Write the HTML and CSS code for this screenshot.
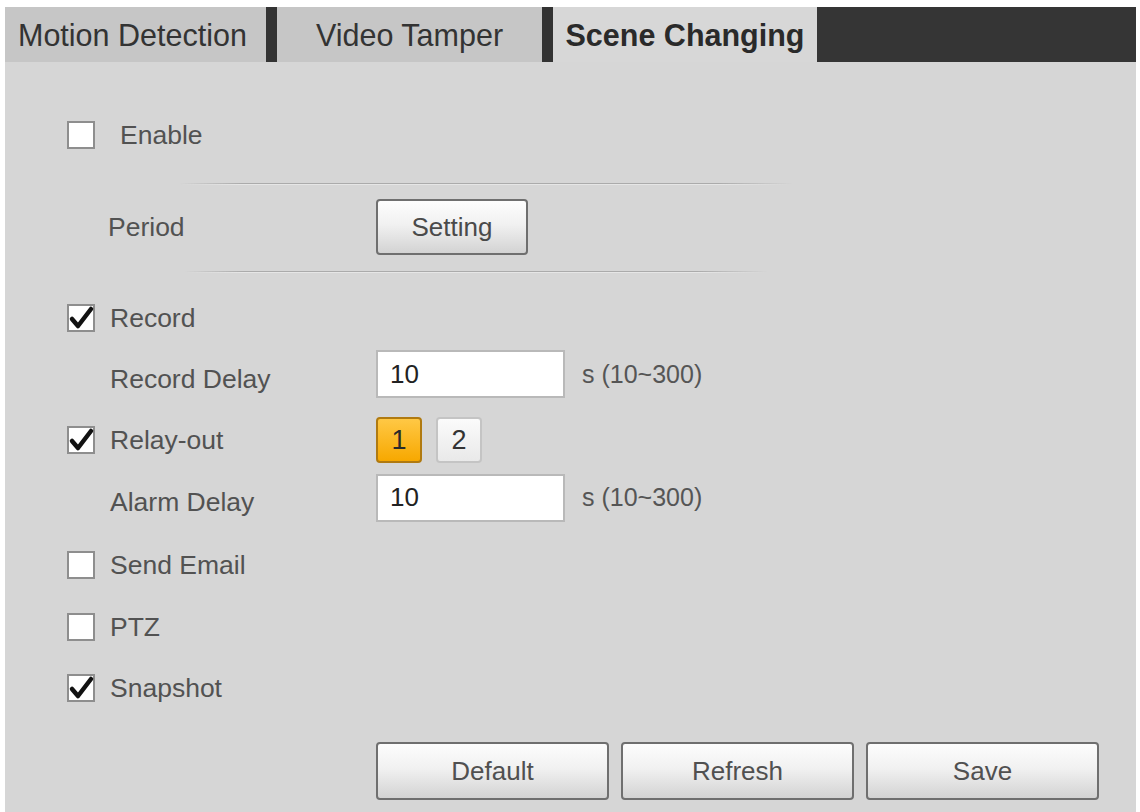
FILE: index.html
```html
<!DOCTYPE html>
<html lang="en">
<head>
<meta charset="utf-8">
<title>Scene Changing</title>
<link rel="stylesheet" href="styles.css">
</head>
<body>
<div class="page">
  <div class="tabs">
    <div class="tab tab-motion">Motion Detection</div>
    <div class="tab-sep"></div>
    <div class="tab tab-tamper">Video Tamper</div>
    <div class="tab-sep"></div>
    <div class="tab tab-active">Scene Changing</div>
    <div class="tab-fill"></div>
  </div>

  <div class="content">
    <div class="row row-enable">
      <div class="lab lab-enable">
        <span class="cb"></span>
        <span class="txt">Enable</span>
      </div>
    </div>

    <div class="divider divider-1"></div>

    <div class="row row-period">
      <div class="lab lab-indent lab-period"><span class="txt">Period</span></div>
      <button class="btn btn-setting">Setting</button>
    </div>

    <div class="divider divider-2"></div>

    <div class="row row-record">
      <div class="lab">
        <span class="cb checked"><svg viewBox="0 0 28 28"><path d="M5 15 L11 22 L24 5"/></svg></span>
        <span class="txt">Record</span>
      </div>
    </div>

    <div class="row row-rdelay">
      <div class="lab lab-indent lab-low"><span class="txt">Record Delay</span></div>
      <div class="field">10</div>
      <span class="unit">s (10~300)</span>
    </div>

    <div class="row row-relay">
      <div class="lab">
        <span class="cb checked"><svg viewBox="0 0 28 28"><path d="M5 15 L11 22 L24 5"/></svg></span>
        <span class="txt">Relay-out</span>
      </div>
      <div class="chans">
        <span class="chan chan-on">1</span>
        <span class="chan">2</span>
      </div>
    </div>

    <div class="row row-adelay">
      <div class="lab lab-indent lab-low"><span class="txt">Alarm Delay</span></div>
      <div class="field">10</div>
      <span class="unit">s (10~300)</span>
    </div>

    <div class="row row-email">
      <div class="lab">
        <span class="cb"></span>
        <span class="txt">Send Email</span>
      </div>
    </div>

    <div class="row row-ptz">
      <div class="lab">
        <span class="cb"></span>
        <span class="txt">PTZ</span>
      </div>
    </div>

    <div class="row row-snap">
      <div class="lab">
        <span class="cb checked"><svg viewBox="0 0 28 28"><path d="M5 15 L11 22 L24 5"/></svg></span>
        <span class="txt">Snapshot</span>
      </div>
    </div>

    <div class="row row-actions">
      <button class="btn btn-action btn-default">Default</button>
      <button class="btn btn-action btn-refresh">Refresh</button>
      <button class="btn btn-action btn-save">Save</button>
    </div>
  </div>
</div>
</body>
</html>
```

FILE: styles.css
```css
html, body {
  margin: 0;
  padding: 0;
  background: #ffffff;
}

body {
  padding: 7px 4px 0 5px;
  font-family: "Liberation Sans", Arial, sans-serif;
  height: 812px;
  box-sizing: border-box;
  overflow: hidden;
}

.page {
  background: #d6d6d6;
  height: 805px;
}

/* ---------- tabs ---------- */
.tabs {
  display: flex;
  height: 55px;
}

.tab {
  display: flex;
  align-items: center;
  justify-content: center;
  font-size: 30.5px;
  color: #333333;
  background: #c6c6c6;
  padding-top: 1px;
  box-sizing: border-box;
}

.tab-motion {
  width: 261px;
  justify-content: flex-start;
  padding-left: 13px;
}

.tab-tamper {
  width: 265px;
}

.tab-active {
  width: 264px;
  background: #d7d7d7;
  font-weight: bold;
  color: #2a2a2a;
}

.tab-sep {
  width: 11px;
  background: #333333;
}

.tab-fill {
  flex: 1;
  background: #353535;
}

/* ---------- content ---------- */
.content {
  display: flex;
  flex-direction: column;
  padding-left: 62px;
}

.row {
  display: flex;
  align-items: center;
  height: 40px;
}

.lab {
  width: 309px;
  display: flex;
  align-items: center;
  gap: 15px;
  flex-shrink: 0;
}

.lab-enable {
  gap: 25px;
}

.lab-indent {
  padding-left: 43px;
  box-sizing: border-box;
}

.lab-period {
  padding-left: 41px;
}

.lab-low {
  padding-top: 10px;
}

.txt {
  font-size: 26.5px;
  color: #525252;
  white-space: nowrap;
}

.cb {
  width: 28px;
  height: 28px;
  box-sizing: border-box;
  border: 2px solid #8e8e8e;
  background: #ffffff;
  flex-shrink: 0;
  position: relative;
}

.cb svg {
  position: absolute;
  left: -2px;
  top: -2px;
  width: 28px;
  height: 28px;
}

.cb svg path {
  fill: none;
  stroke: #111111;
  stroke-width: 4.5;
  stroke-linecap: round;
  stroke-linejoin: round;
}

/* row vertical rhythm */
.row-enable { margin-top: 53px; }
.row-period { margin-top: 14px; height: 56px; }
.row-record { margin-top: 25px; }
.row-rdelay { margin-top: 12px; height: 48px; }
.row-relay  { margin-top: 19px; height: 46px; }
.row-adelay { margin-top: 10px; height: 49px; }
.row-email  { margin-top: 23px; }
.row-ptz    { margin-top: 22px; }
.row-snap   { margin-top: 21px; }
.row-actions {
  margin-top: 34px;
  height: 58px;
  padding-left: 309px;
  gap: 12px;
}

/* dividers */
.divider {
  height: 2px;
  background: linear-gradient(to bottom, #ababab 0, #ababab 1px, #e6e6e6 1px, #e6e6e6 2px);
  -webkit-mask-image: linear-gradient(to right, transparent 0, #000 10%, #000 88%, transparent 100%);
  mask-image: linear-gradient(to right, transparent 0, #000 10%, #000 88%, transparent 100%);
}

.divider-1 {
  margin-top: 28px;
  margin-left: 113px;
  width: 612px;
}

.divider-2 {
  margin-top: 16px;
  margin-left: 118px;
  width: 582px;
}

/* buttons */
.btn {
  font-family: "Liberation Sans", Arial, sans-serif;
  font-size: 26px;
  color: #4a4a4a;
  border: 2px solid #6f6f6f;
  border-radius: 4px;
  background: linear-gradient(to bottom, #fdfdfd 0%, #f1f1f1 45%, #d3d3d3 100%);
  padding: 0;
  box-sizing: border-box;
  display: flex;
  align-items: center;
  justify-content: center;
}

.btn-setting {
  width: 152px;
  height: 56px;
}

.btn-action {
  width: 233px;
  height: 58px;
  color: #505050;
}

/* fields */
.field {
  width: 189px;
  height: 48px;
  box-sizing: border-box;
  background: #ffffff;
  border: 2px solid #b9b9b9;
  padding-left: 12px;
  display: flex;
  align-items: center;
  font-size: 26px;
  color: #222222;
}

.unit {
  margin-left: 17px;
  font-size: 25px;
  color: #555555;
}

/* channels */
.chans {
  display: flex;
  gap: 14px;
}

.chan {
  width: 46px;
  height: 46px;
  box-sizing: border-box;
  border: 2px solid #c4c4c4;
  border-radius: 4px;
  background: linear-gradient(to bottom, #fbfbfb 0%, #e9e9e9 100%);
  display: flex;
  align-items: center;
  justify-content: center;
  font-size: 27px;
  color: #333333;
}

.chan-on {
  border-color: #b07a10;
  background: linear-gradient(to bottom, #ffc845 0%, #f7a800 100%);
  color: #2a2a2a;
}
```
